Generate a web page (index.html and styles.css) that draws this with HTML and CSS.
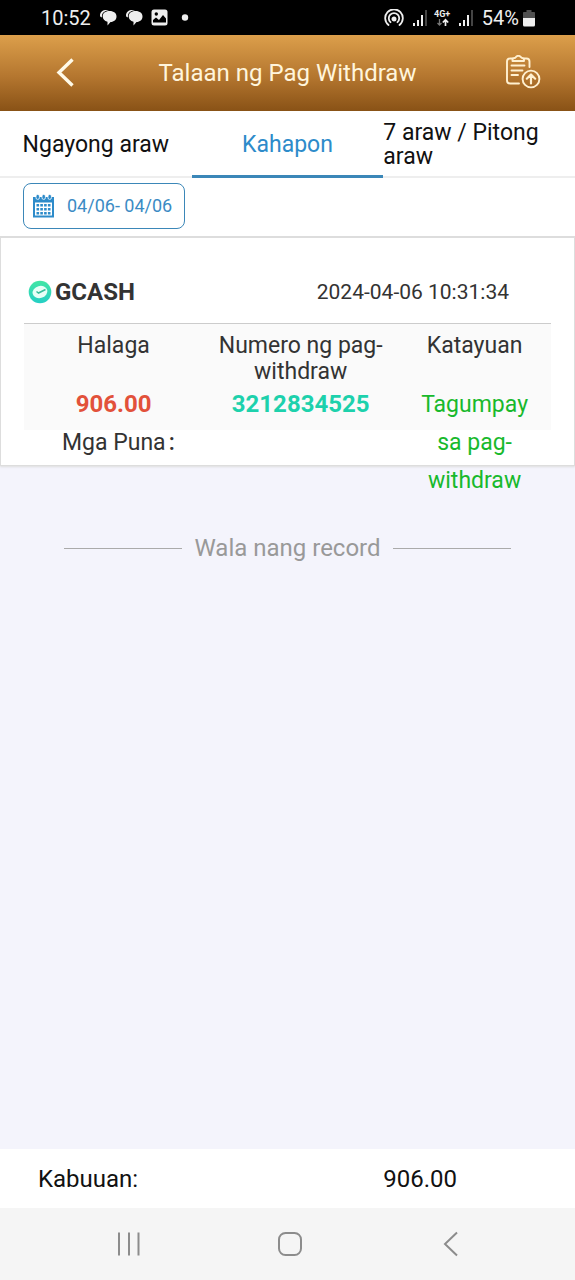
FILE: index.html
```html
<!DOCTYPE html>
<html lang="fil">
<head>
<meta charset="utf-8">
<meta name="viewport" content="width=device-width, initial-scale=1">
<title>Talaan ng Pag Withdraw</title>
<link rel="stylesheet" href="styles.css">
</head>
<body>
<div class="screen">
  <div class="status-bar">
    <div class="status-group">
      <span>10:52</span>
      <svg width="18" height="17" viewBox="0 0 18 17"><path d="M1 6.500C1 2 5 .2 10 1.200C5 1.500 2.300 4.500 3 8.500C1.500 8 1 7.500 1 6.500Z" fill="#eee"/><path d="M10.500 2c4.500 0 7 2.300 7 5.500s-2.500 5.500-6 5.500L8.500 16.500V12.800C5.500 12 3.700 10 3.700 7.500c0-3.200 2.500-5.500 6.800-5.500Z" fill="#eee"/></svg>
      <svg width="18" height="17" viewBox="0 0 18 17"><path d="M1 6.500C1 2 5 .2 10 1.200C5 1.500 2.300 4.500 3 8.500C1.500 8 1 7.500 1 6.500Z" fill="#eee"/><path d="M10.500 2c4.500 0 7 2.300 7 5.500s-2.500 5.500-6 5.500L8.500 16.500V12.800C5.500 12 3.700 10 3.700 7.500c0-3.200 2.500-5.500 6.800-5.500Z" fill="#eee"/></svg>
      <svg width="17" height="17" viewBox="0 0 17 17"><rect x=".5" y=".5" width="16" height="16" rx="2.500" fill="#eee"/><circle cx="5.300" cy="5" r="1.700" fill="#000"/><path d="M2 13.500V11L5 8.500L8 11L12 6L15 9.500V13.500Z" fill="#000"/></svg>
      <svg class="status-dot" width="8" height="17" viewBox="0 0 8 17"><circle cx="4" cy="8.500" r="3.200" fill="#eee"/></svg>
    </div>
    <div class="status-group status-right">
      <svg width="20" height="18" viewBox="0 0 20 18" fill="none" stroke="#eee" stroke-width="1.800" stroke-linecap="round"><path d="M4.500 16A8.800 8.800 0 1 1 15.500 16M6.500 13.200A5.200 5.200 0 1 1 13.500 13.200"/><circle cx="10" cy="10" r="1.600" fill="#eee"/></svg>
      <svg width="16" height="18" viewBox="0 0 16 18"><path d="M1 14h2v3H1zM5 11h2v6H5zM9 6h2v11H9z" fill="#eee"/><path d="M13 1h2v16h-2z" fill="#444"/></svg>
      <svg class="network" width="20" height="18" viewBox="0 0 20 18"><text x="1" y="8" font-size="9" font-weight="700" fill="#eee">4G+</text><path d="M6.500 10v6M4.500 14l2 2 2-2" fill="none" stroke="#777" stroke-width="1.300"/><path d="M12.500 17v-6M9.800 13.500l2.700-2.700 2.700 2.700" fill="none" stroke="#eee" stroke-width="1.700"/></svg>
      <svg width="16" height="18" viewBox="0 0 16 18"><path d="M1 14h2v3H1zM5 11h2v6H5zM9 6h2v11H9z" fill="#eee"/><path d="M13 1h2v16h-2z" fill="#444"/></svg>
      <span class="battery-label">54%</span>
      <svg width="12" height="18" viewBox="0 0 12 18"><path d="M3.500 1h5v2H11c.5 0 1 .4 1 1v5H0V4c0-.6.500-1 1-1h2.500Z" fill="#505050"/><path d="M0 9h12v7q0 1.500-1.500 1.500h-9Q0 17.500 0 16Z" fill="#eee"/></svg>
    </div>
  </div>

  <header class="title-bar">
    <button class="icon-button" type="button" aria-label="Bumalik"><svg width="36" height="36" viewBox="0 0 36 36" fill="none" stroke="#fffae8" stroke-width="3.400"><path d="M25.500 4.500L12 17.500L25.500 30.500"/></svg></button>
    <h1 class="title">Talaan ng Pag Withdraw</h1>
    <button class="icon-button icon-end" type="button" aria-label="Mga ulat"><svg width="36" height="36" viewBox="0 0 36 36" fill="none" stroke="#fff0d0" stroke-width="1.900" stroke-linecap="round" stroke-linejoin="round"><path d="M7 3.500H5Q2 3.500 2 6.500V25.500Q2 28.500 5 28.500H14M19.500 3.500H21.500Q24.500 3.500 24.500 6.500V12"/><path d="M7.500 6V4.500Q7.500 3 9.500 3C10.800 3 11 .8 13.300 .8S16 3 17 3Q19 3 19 4.500V6Z"/><path d="M6.500 10.500H19.500M6.500 15.500H17.500M6.500 20H13"/><circle cx="26" cy="24" r="8.400"/><path d="M26 28.500V20M21.800 23.700L26 19.500L30.200 23.700" stroke-width="2.200"/></svg></button>
  </header>

  <nav class="tabs">
    <button class="tab" type="button"><span>Ngayong araw</span></button>
    <button class="tab tab-active" type="button" aria-current="true"><span>Kahapon</span></button>
    <button class="tab" type="button"><span>7 araw / Pitong araw</span></button>
  </nav>

  <div class="filter">
    <button class="date-button" type="button">
      <svg width="23" height="24" viewBox="0 0 23 24"><path d="M1 3h21v20.500H1Z" fill="#2d8bca"/><path d="M3 8.500h17v13H3Z" fill="#fff"/><g fill="#2d8bca" stroke="#fff" stroke-width=".8"><rect x="4" y=".4" width="3.400" height="5" rx="1.600"/><rect x="10" y=".4" width="3.400" height="5" rx="1.600"/><rect x="16" y=".4" width="3.400" height="5" rx="1.600"/></g><path d="M4.500 11.200h14M4.500 15.200h14M4.500 19.200h14" stroke="#2d8bca" stroke-width="2.400" stroke-dasharray="2.600 1.200"/></svg>
      <span>04/06- 04/06</span>
    </button>
  </div>

  <main class="content">
    <article class="card">
      <div class="card-head">
        <div class="method">
          <svg width="24" height="24" viewBox="0 0 24 24"><defs><linearGradient id="coin" x2="0" y2="1"><stop stop-color="#42e6a4"/><stop offset="1" stop-color="#25cfc5"/></linearGradient></defs><circle cx="12" cy="12" r="11.300" fill="url(#coin)"/><ellipse cx="12" cy="12" rx="7.500" ry="6" fill="#e8fff7" transform="rotate(-15 12 12)"/><path d="M8.500 11.500L10.500 13L17.500 9.500" fill="none" stroke="#36bd9a" stroke-width="1.500"/></svg>
          <strong>GCASH</strong>
        </div>
        <time datetime="2024-04-06T10:31:34">2024-04-06 10:31:34</time>
      </div>
      <table class="details">
        <thead>
          <tr><th class="col-amount">Halaga</th><th class="col-number">Numero ng pag-withdraw</th><th class="col-status">Katayuan</th></tr>
        </thead>
        <tbody>
          <tr><td class="amount">906.00</td><td class="number">3212834525</td><td class="status"><div class="status-text">Tagumpay sa pag-withdraw</div></td></tr>
        </tbody>
      </table>
      <p class="remarks">Mga Puna<span class="colon">:</span></p>
    </article>
    <p class="end">Wala nang record</p>
  </main>

  <footer class="total"><span>Kabuuan:</span><span>906.00</span></footer>

  <nav class="system-nav">
    <button class="nav-button" type="button" aria-label="Mga kamakailan"><svg width="28" height="28" viewBox="0 0 28 28" fill="none" stroke="#8c8c8c" stroke-width="2"><path d="M4 2.500v23M14 2.500v23M23.500 2.500v23"/></svg></button>
    <button class="nav-button" type="button" aria-label="Home"><svg width="28" height="28" viewBox="0 0 28 28" fill="none" stroke="#8c8c8c" stroke-width="2"><rect x="3" y="3" width="22" height="22" rx="6.500"/></svg></button>
    <button class="nav-button" type="button" aria-label="Bumalik"><svg width="28" height="28" viewBox="0 0 28 28" fill="none" stroke="#8c8c8c" stroke-width="2"><path d="M20 2.500L8 14L20 25.500"/></svg></button>
  </nav>
</div>
</body>
</html>
```
FILE: styles.css
```css
* { box-sizing: border-box; }
body {
  margin: 0;
  font-family: Roboto, "Noto Sans", sans-serif;
  font-size: 23px;
  line-height: 26px;
  color: #333;
  background: #f4f4fc;
}
button {
  border: 0;
  padding: 0;
  margin: 0;
  background: none;
  font: inherit;
  color: inherit;
}
svg { display: block; flex: none; }
h1, p { margin: 0; }

.screen { display: flex; flex-direction: column; min-height: 100vh; }

.status-bar {
  display: flex;
  justify-content: space-between;
  align-items: center;
  height: 35px;
  padding: 0 40px 0 41px;
  background: #000;
  color: #eee;
  font-size: 20px;
}
.status-group { display: flex; align-items: center; gap: 8px; }
.status-dot { margin-left: 5px; }
.status-right { gap: 8px; }
.network { margin: 0 -3px; font-family: Roboto, sans-serif; }
.battery-label { margin-right: -4px; }

.title-bar {
  display: grid;
  grid-template-columns: 1fr auto 1fr;
  align-items: center;
  height: 76px;
  padding: 0 34px 0 34px;
  background: linear-gradient(#dc9f4b, #b4762f 55%, #895216);
}
.icon-button { justify-self: start; padding-left: 13px; }
.icon-end { justify-self: end; padding-left: 0; }
.title { font-size: 24px; font-weight: 400; color: #fff5dc; }

.tabs { display: grid; grid-template-columns: repeat(3, 1fr); min-height: 67px; background: #fff; }
.tab {
  display: flex;
  align-items: center;
  justify-content: center;
  padding-top: 2px;
  border-bottom: 2px solid #eee;
  color: #111;
  line-height: 24px;
  text-align: left;
}
.tab-active { padding-top: 4px; border-bottom: 3px solid #3b87b8; color: #2d8bca; }

.filter { padding: 5px 23px 7px; background: #fff; border-bottom: 2px solid #ddd; }
.date-button {
  display: flex;
  align-items: center;
  gap: 12px;
  height: 46px;
  padding: 0 12px 0 8px;
  border: 1px solid #3b87b8;
  border-radius: 8px;
  color: #3b8bc4;
  font-size: 18px;
}

.content { flex: 1; }
.card {
  padding: 33px 23px 9px;
  background: #fff;
  border: 1px solid #ddd;
  border-top: 0;
  box-shadow: 0 1px 2px #ddd;
}
.card-head {
  display: flex;
  align-items: center;
  justify-content: space-between;
  padding: 8px 42px 18px 4px;
  border-bottom: 1px solid #ccc;
  font-size: 21px;
}
.method { display: flex; align-items: center; gap: 3px; font-size: 24px; }

.details {
  width: 100%;
  table-layout: fixed;
  border-collapse: collapse;
  background: #fafafa;
  text-align: center;
}
.details th { padding: 9px 12px 0; font-weight: 400; vertical-align: top; }
.details td { padding: 0 16px; vertical-align: top; line-height: 38px; }
.details .col-amount { width: 34%; }
.details .col-number { width: 37%; }
.details .col-status { width: 29%; }
.details .amount, .details .number { padding: 0; font-size: 24px; font-weight: 700; }
.amount { color: #e2513a; }
.number { color: #1dd1ac; }
.status { color: #18b92c; }
/* Long statuses run past the row without making it taller. */
.status-text { height: 45px; padding-top: 1px; overflow: visible; }
.remarks { padding-left: 38px; }
.colon { padding-left: 3px; font-weight: 500; }

.end {
  display: flex;
  align-items: center;
  gap: 12px;
  margin: 69px 64px 0;
  font-size: 24px;
  color: #999;
}
.end::before, .end::after { content: ""; flex: 1; height: 1px; background: #aaa; }

.total {
  display: grid;
  grid-template-columns: 2fr 1fr;
  padding: 17px 0 16px;
  background: #fff;
  color: #111;
  font-size: 24px;
}
.total span:first-child { padding-left: 38px; }

.system-nav {
  display: flex;
  justify-content: space-between;
  align-items: center;
  height: 72px;
  padding: 0 110px 0 115px;
  background: #f5f5f5;
}
```
